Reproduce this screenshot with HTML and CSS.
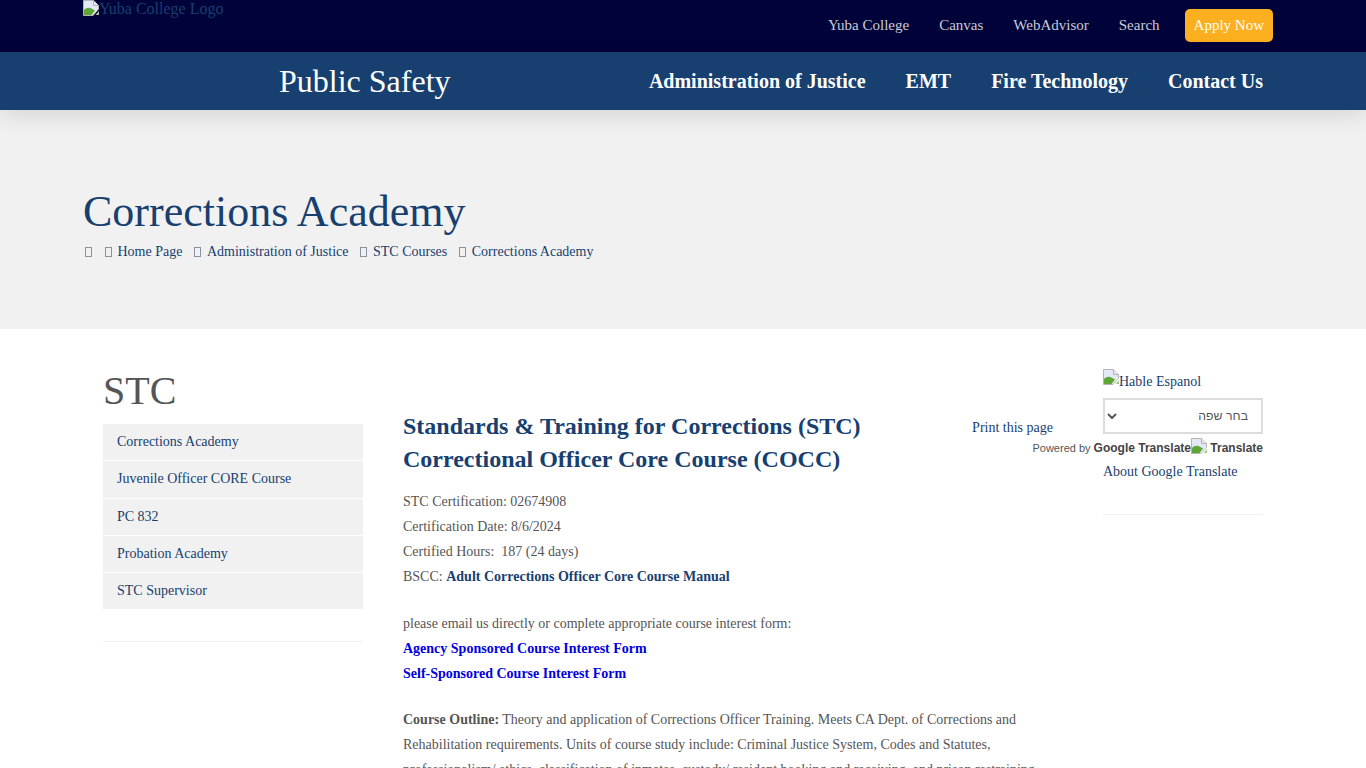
FILE: index.html
```html
<!DOCTYPE html>
<html lang="en">
<head>
<meta charset="utf-8">
<title>Corrections Academy</title>
<link rel="stylesheet" href="styles.css">
</head>
<body>
<svg class="defs" width="0" height="0" aria-hidden="true">
  <symbol id="broken" viewBox="0 0 16 16">
    <path d="M0.5 0.5H10.5L15.5 5.5V9L10 15.5H0.5Z" fill="#fff" stroke="#b4b4b4"/>
    <path d="M10.5 0.5V5.5H15.5" fill="#e8e8e8" stroke="#b4b4b4"/>
    <path d="M1 1H10V6H15V8.500L9.500 15H1Z" fill="#e2e9f5"/>
    <path d="M1 15V10C3 8 6 7 8.500 8.500L12 10.500L8.500 15Z" fill="#5fa637"/>
    <path d="M12.500 15L16 11V15Z" fill="#a9c88f"/>
  </symbol>
</svg>
<header class="top-bar">
  <div class="wrap top-inner">
    <a class="logo" href="#"><svg class="broken"><use href="#broken"/></svg>Yuba College Logo</a>
    <nav class="top-links">
      <a href="#">Yuba College</a>
      <a href="#">Canvas</a>
      <a href="#">WebAdvisor</a>
      <a href="#">Search</a>
      <a class="apply" href="#">Apply Now</a>
    </nav>
  </div>
</header>
<div class="main-nav">
  <div class="wrap nav-inner">
    <a class="site-title" href="#">Public Safety</a>
    <nav class="nav-links">
      <a href="#">Administration of Justice</a>
      <a href="#">EMT</a>
      <a href="#">Fire Technology</a>
      <a href="#">Contact Us</a>
    </nav>
  </div>
</div>
<section class="hero">
  <div class="wrap">
    <h1>Corrections Academy</h1>
    <ol class="crumbs">
      <li class="crumb-home"><i class="tofu"></i></li>
      <li><i class="tofu"></i><a href="#">Home Page</a></li>
      <li><i class="tofu"></i><a href="#">Administration of Justice</a></li>
      <li><i class="tofu"></i><a href="#">STC Courses</a></li>
      <li><i class="tofu"></i><a href="#">Corrections Academy</a></li>
    </ol>
  </div>
</section>
<main class="wrap columns">
  <aside class="side">
    <h2 class="side-title">STC</h2>
    <ul class="side-menu">
      <li><a href="#">Corrections Academy</a></li>
      <li><a href="#">Juvenile Officer CORE Course</a></li>
      <li><a href="#">PC 832</a></li>
      <li><a href="#">Probation Academy</a></li>
      <li><a href="#">STC Supervisor</a></li>
    </ul>
    <hr class="rule rule-left">
  </aside>
  <article class="content">
    <a class="print" href="#">Print this page</a>
    <h2 class="course-title">Standards &amp; Training for Corrections (STC) Correctional Officer Core Course (COCC)</h2>
    <p>STC Certification: 02674908<br>
    Certification Date: 8/6/2024<br>
    Certified Hours:&nbsp; 187 (24 days)<br>
    BSCC: <a class="doc" href="#">Adult Corrections Officer Core Course Manual</a></p>
    <p>please email us directly or complete appropriate course interest form:<br>
    <a class="form" href="#">Agency Sponsored Course Interest Form</a><br>
    <a class="form" href="#">Self-Sponsored Course Interest Form</a></p>
    <p><strong>Course Outline:</strong> Theory and application of Corrections Officer Training. Meets CA Dept. of Corrections and Rehabilitation requirements. Units of course study include: Criminal Justice System, Codes and Statutes, professionalism/ ethics, classification of inmates, custody/ resident booking and receiving, and prison restraining</p>
  </article>
  <aside class="right">
    <a class="hable" href="#"><svg class="broken"><use href="#broken"/></svg>Hable Espanol</a>
    <select class="lang" dir="rtl" aria-label="בחר שפה"><option>בחר שפה</option></select>
    <div class="powered"><span>Powered by&nbsp;</span><b>Google Translate</b><svg class="broken"><use href="#broken"/></svg><b>&nbsp;Translate</b></div>
    <a class="about" href="#">About Google Translate</a>
    <hr class="rule rule-right">
  </aside>
</main>
</body>
</html>
```
FILE: styles.css
```css
* { box-sizing: border-box; }
html, body { height: 768px; overflow: hidden; }
body { margin: 0; background: #fff; color: #555; font: 14px/25px "Liberation Serif", "Times New Roman", serif; }
a { color: #173f6f; text-decoration: none; }
.defs { position: absolute; }
.wrap { width: 1200px; margin: 0 auto; }
.broken { width: 16px; height: 16px; display: inline-block; vertical-align: baseline; flex: none; }

.top-bar { height: 52px; background: #00023a; }
.top-inner { display: flex; justify-content: space-between; }
.logo { font-size: 16px; line-height: 18px; height: 18px; }
.logo .broken { vertical-align: -2px; }
.top-links { display: flex; align-items: center; height: 50px; padding-right: 10px; }
.top-links a { color: #c9ccd4; font-size: 15px; margin-left: 30px; }
.top-links .apply { margin-left: 25px; height: 33px; line-height: 32px; padding: 0 9px; background: #fdb01f; color: #fff; border-radius: 5px; }

.main-nav { height: 58px; background: #173f6f; position: relative; z-index: 1; box-shadow: 0 5px 25px rgba(0,0,0,.12); }
.nav-inner { display: flex; justify-content: space-between; align-items: center; height: 58px; padding: 0 20px 0 196px; }
.site-title { color: #fff; font-size: 32px; line-height: 56px; }
.nav-links { display: flex; gap: 40px; }
.nav-links a { color: #fff; font-size: 20px; font-weight: 700; }

.hero { height: 219px; background: #f1f1f1; padding-top: 76px; }
.hero h1 { margin: 0; color: #173f6f; font-size: 44px; font-weight: 400; line-height: 52px; }
.crumbs { display: flex; list-style: none; margin: 1px 0 0; padding: 0 0 0 2px; gap: 12px; height: 25px; }
.crumbs li { display: flex; align-items: center; gap: 5.5px; }
.crumbs .crumb-home { margin-right: 1px; }
.tofu { width: 7px; height: 10px; border: 1px solid #8793a3; display: block; }

.columns { display: grid; grid-template-columns: 300px 700px 200px; padding-top: 39px; }
.side, .content, .right { padding: 0 20px; min-width: 0; }
.side-title { margin: 0; font-size: 40px; font-weight: 400; line-height: 46px; color: #555; }
.side-menu { list-style: none; margin: 10px 0 0; padding: 0; }
.side-menu li { height: 36.25px; margin-bottom: 1px; background: #f1f1f1; padding: 0 14px; line-height: 35px; }
.side-menu a { display: block; }
.rule { border: 0; border-top: 1px solid #f1f1f1; margin: 30px 0 0; }
.rule-left { margin-top: 32px; }

.content { position: relative; padding-top: 42px; }
.print { position: absolute; right: 30px; top: 47px; }
.course-title { margin: 0 0 13px; width: 480px; color: #173f6f; font-size: 24px; line-height: 33px; font-weight: 700; }
.content p { margin: 0 0 21.5px; }
.doc { font-weight: 700; }
.form { font-weight: 700; color: #0000e0; }
.content strong { font-weight: 700; }

.hable { display: block; line-height: 25px; padding-top: 1px; height: 25px; }
.hable .broken { vertical-align: 1px; }
.lang { display: block; width: 160px; height: 36px; margin-top: 5px; border: 2px solid #ddd; background: #fff; color: #555; font: 12.3px "Liberation Sans", Arial, sans-serif; padding: 0 9px 0 12px; }
.powered { display: flex; justify-content: flex-end; align-items: center; height: 18px; white-space: nowrap; font: 11px/18px "Liberation Sans", Arial, sans-serif; color: #555; margin-top: 5px; }
.powered b { color: #444; font-size: 12px; }
.powered .broken { align-self: flex-start; margin-top: -1px; }
.about { display: block; line-height: 25px; margin-top: 2px; }
```
